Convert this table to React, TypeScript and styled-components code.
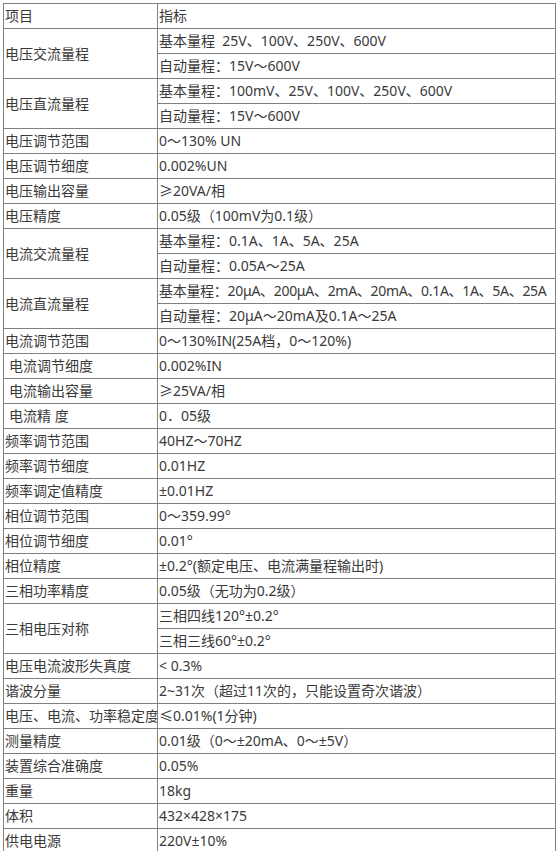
import React from 'react';
import styled, { createGlobalStyle } from 'styled-components';

const GlobalStyle = createGlobalStyle`
  html, body {
    margin: 0;
    padding: 0;
    background: #ffffff;
  }
`;

const Page = styled.div`
  padding: 3px 0 0 3px;
`;

const SpecTable = styled.table`
  border-collapse: collapse;
  table-layout: fixed;
  width: 552px;
  font-family: "Noto Sans", "Noto Sans CJK SC", sans-serif;
  font-size: 14px;
  color: #3a3a3a;
`;

const Cell = styled.td<{ $indent?: boolean; $tight?: boolean }>`
  border: 1px solid #808080;
  height: 24px;
  padding: 0 0 0 ${({ $indent }) => ($indent ? '5px' : '1px')};
  line-height: 24px;
  white-space: nowrap;
  overflow: hidden;
  vertical-align: middle;
  text-align: left;
  letter-spacing: ${({ $tight }) => ($tight ? '-0.3px' : 'normal')};
`;

type Spec = { label: string; values: string[]; indent?: boolean };

const specs: Spec[] = [
  { label: '项目', values: ['指标'] },
  { label: '电压交流量程', values: ['基本量程\u00a0\u00a025V、100V、250V、600V', '自动量程：15V～600V'] },
  { label: '电压直流量程', values: ['基本量程：100mV、25V、100V、250V、600V', '自动量程：15V～600V'] },
  { label: '电压调节范围', values: ['0～130% UN'] },
  { label: '电压调节细度', values: ['0.002%UN'] },
  { label: '电压输出容量', values: ['≥20VA/相'] },
  { label: '电压精度', values: ['0.05级（100mV为0.1级）'] },
  { label: '电流交流量程', values: ['基本量程：0.1A、1A、5A、25A', '自动量程：0.05A～25A'] },
  { label: '电流直流量程', values: ['基本量程：20μA、200μA、2mA、20mA、0.1A、1A、5A、25A', '自动量程：20μA～20mA及0.1A～25A'] },
  { label: '电流调节范围', values: ['0～130%IN(25A档，0～120%)'] },
  { label: '电流调节细度', values: ['0.002%IN'], indent: true },
  { label: '电流输出容量', values: ['≥25VA/相'], indent: true },
  { label: '电流精 度', values: ['0．05级'], indent: true },
  { label: '频率调节范围', values: ['40HZ～70HZ'] },
  { label: '频率调节细度', values: ['0.01HZ'] },
  { label: '频率调定值精度', values: ['±0.01HZ'] },
  { label: '相位调节范围', values: ['0～359.99°'] },
  { label: '相位调节细度', values: ['0.01°'] },
  { label: '相位精度', values: ['±0.2°(额定电压、电流满量程输出时)'] },
  { label: '三相功率精度', values: ['0.05级（无功为0.2级）'] },
  { label: '三相电压对称', values: ['三相四线120°±0.2°', '三相三线60°±0.2°'] },
  { label: '电压电流波形失真度', values: ['< 0.3%'] },
  { label: '谐波分量', values: ['2~31次（超过11次的，只能设置奇次谐波）'] },
  { label: '电压、电流、功率稳定度', values: ['≤0.01%(1分钟)'] },
  { label: '测量精度', values: ['0.01级（0～±20mA、0～±5V）'] },
  { label: '装置综合准确度', values: ['0.05%'] },
  { label: '重量', values: ['18kg'] },
  { label: '体积', values: ['432×428×175'] },
  { label: '供电电源', values: ['220V±10%'] },
];

export default function App() {
  return (
    <Page>
      <GlobalStyle />
      <SpecTable>
        <colgroup>
          <col style={{ width: 154 }} />
          <col style={{ width: 398 }} />
        </colgroup>
        <tbody>
          {specs.map((s) =>
            s.values.map((v, i) => (
              <tr key={s.label + i}>
                {i === 0 && (
                  <Cell rowSpan={s.values.length} $indent={s.indent}>
                    {s.label}
                  </Cell>
                )}
                <Cell $tight={v.length > 36}>{v}</Cell>
              </tr>
            ))
          )}
        </tbody>
      </SpecTable>
    </Page>
  );
}
